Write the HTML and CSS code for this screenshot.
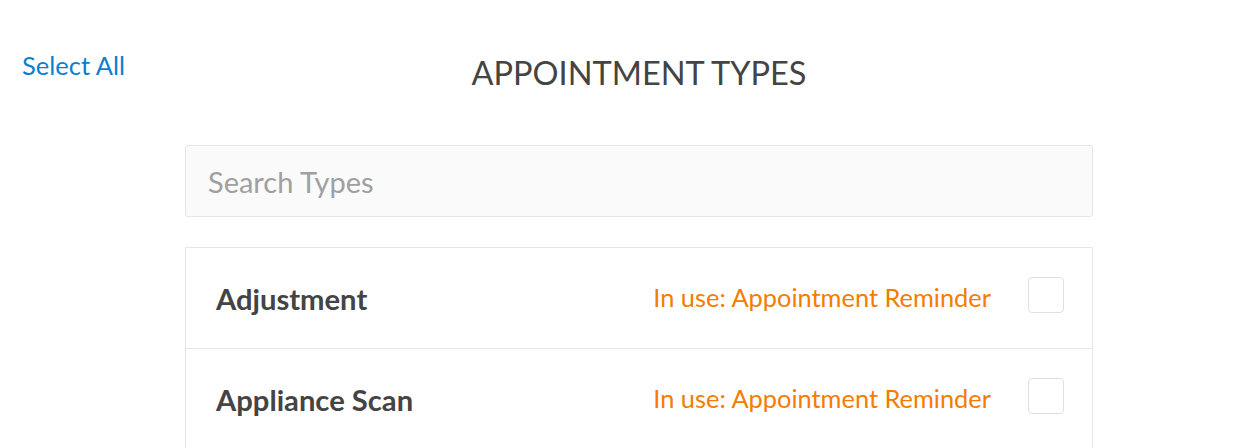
FILE: index.html
```html
<!DOCTYPE html>
<html>
<head>
<meta charset="utf-8">
<link rel="stylesheet" href="styles.css">
</head>
<body>
<div class="page">
  <a class="select-all" href="#">Select All</a>
  <div class="main">
    <h1 class="title">APPOINTMENT TYPES</h1>
    <div class="search">Search Types</div>
    <div class="list">
      <div class="row">
        <div class="name">Adjustment</div>
        <div class="inuse">In use: Appointment Reminder</div>
        <div class="check"></div>
      </div>
      <div class="row">
        <div class="name">Appliance Scan</div>
        <div class="inuse">In use: Appointment Reminder</div>
        <div class="check"></div>
      </div>
    </div>
  </div>
</div>
</body>
</html>
```
FILE: styles.css
```css
* { box-sizing: border-box; }
html, body { margin: 0; padding: 0; background: #fff; }
body { font-family: Lato, "Liberation Sans", sans-serif; color: #444; overflow: hidden; height: 448px; }
.page { position: relative; padding-top: 48px; }
.select-all {
  position: absolute; left: 22px; top: 49px;
  font-size: 25.5px; color: #0a7fd1; text-decoration: none; line-height: 32px;
}
.main { margin-left: 185px; width: 908px; }
.title {
  margin: 0; text-align: center; font-weight: 400; font-size: 32.5px;
  line-height: 50px; color: #444;
}
.search {
  margin-top: 47px; height: 72px; background: #fafafa;
  border: 1px solid #e6e6e6; border-radius: 3px;
  padding-left: 22px; font-size: 29px; color: #a0a0a0;
  display: flex; align-items: center;
}
.list { margin-top: 30px; border: 1px solid #e6e6e6; border-bottom: none; }
.row {
  height: 101px; display: flex; align-items: center;
  border-bottom: 1px solid #e6e6e6; padding-left: 30px; padding-right: 28px;
}
.name { font-weight: 700; font-size: 29.2px; color: #444; flex: 1; }
.inuse { font-size: 25.4px; color: #f57c00; margin-right: 37px; margin-bottom: 2px; }
.check {
  width: 36px; height: 36px; border: 1px solid #e0e0e0; border-radius: 4px; background: #fff;
  margin-bottom: 6px;
}
```
